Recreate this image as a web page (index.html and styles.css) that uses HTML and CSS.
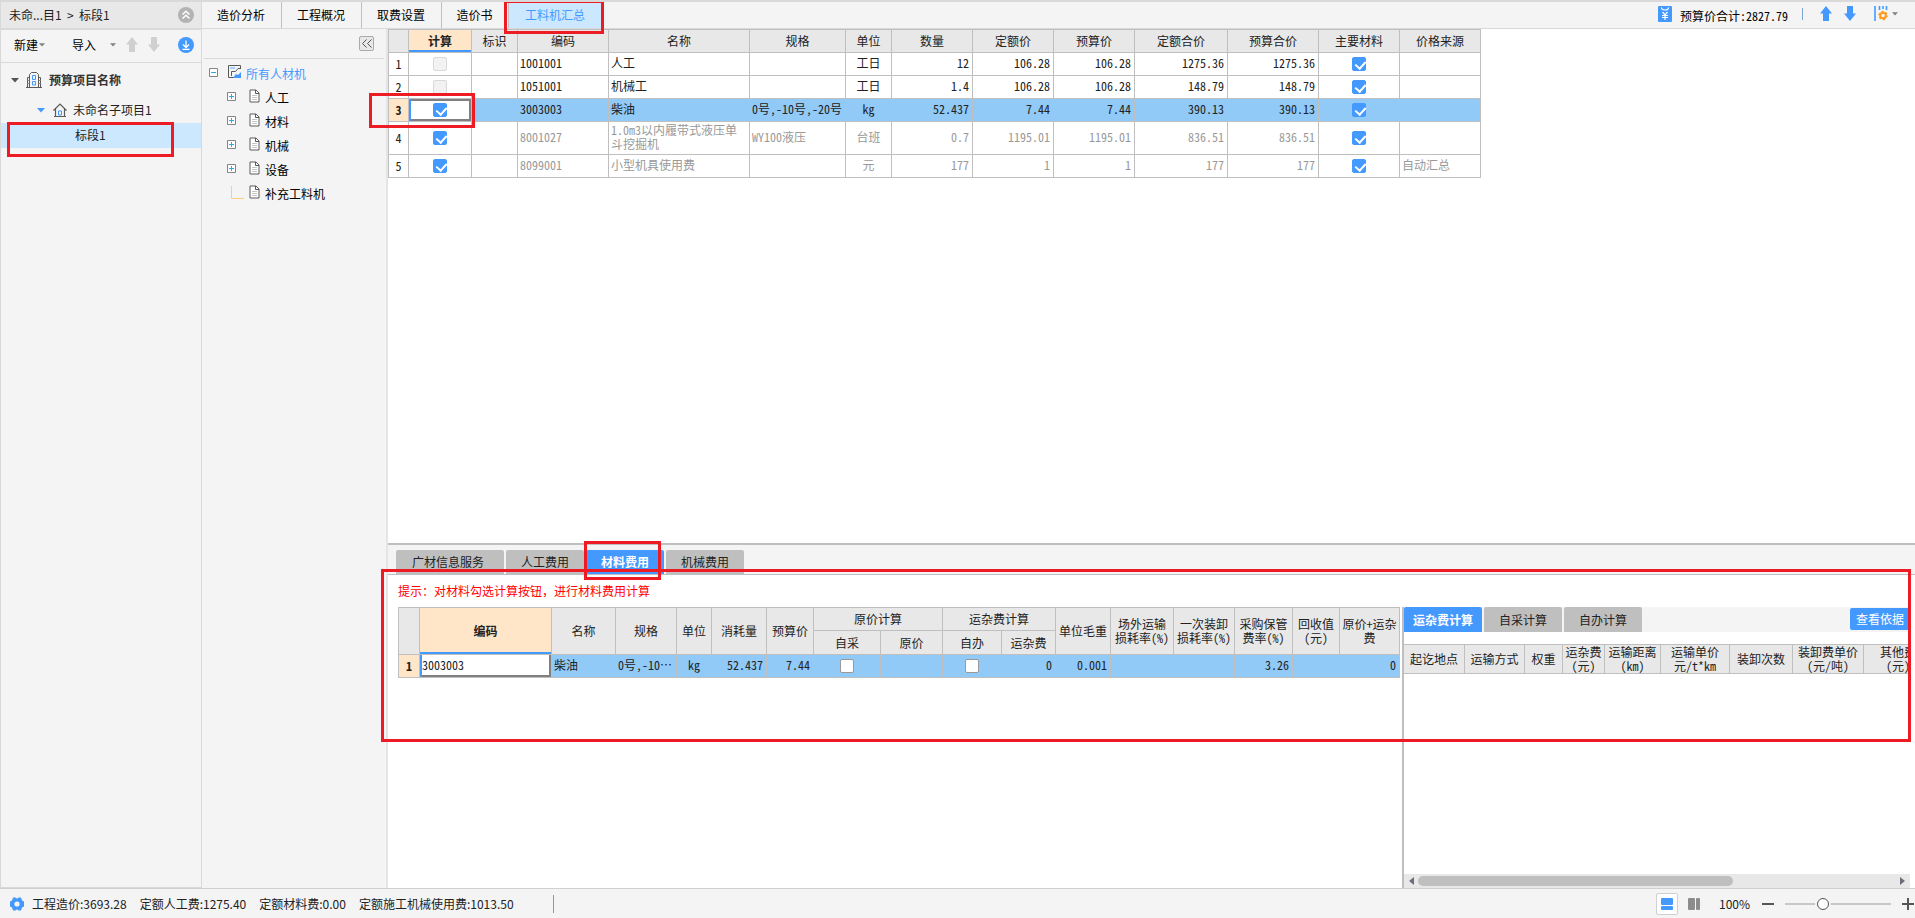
FILE: index.html
```html
<!DOCTYPE html>
<html lang="zh-CN">
<head>
<meta charset="utf-8">
<title>工料机汇总</title>
<link rel="stylesheet" href="styles.css">
</head>
<body>
<svg class="defs" aria-hidden="true">
  <symbol id="i-doc" viewBox="0 0 11 14"><path d="M1 1h6l3 3v9H1z" fill="#fff" stroke="#5a5a5a"/><path d="M6.500 1v3.500H10" fill="none" stroke="#5a5a5a"/><path d="M3 6.500h5M3 8.500h5M3 10.500h5" stroke="#c4c4c4"/></symbol>
  <symbol id="i-up" viewBox="0 0 12 16"><path d="M6 0l6 7.500H9V15H3V7.500H0z" fill="currentColor"/></symbol>
  <symbol id="i-down" viewBox="0 0 12 16"><path d="M6 15l6-7.500H9V0H3v7.500H0z" fill="currentColor"/></symbol>
  <symbol id="i-plus" viewBox="0 0 9 9"><path d="M.5.5h8v8h-8z" fill="#fff" stroke="#848484"/><path d="M2 4.500h5M4.500 2v5" stroke="#29abe2"/></symbol>
  <symbol id="i-caret" viewBox="0 0 8 5"><path d="M0 0h8L4 4.500z" fill="currentColor"/></symbol>
</svg>

<main class="app">
  <aside class="sidebar">
    <header class="crumb">
      <span>未命...目1&nbsp; &gt; &nbsp;标段1</span>
      <button class="icon-btn" aria-label="收起"><svg width="16" height="16" viewBox="0 0 16 16"><circle cx="8" cy="8" r="8" fill="#b3b3b3"/><path d="M4.500 7.500L8 4.300l3.500 3.200M4.500 11.500L8 8.300l3.500 3.200" fill="none" stroke="#fff" stroke-width="1.500"/></svg></button>
    </header>
    <div class="side-tools">
      <button class="text-btn new-btn">新建<svg class="drop" width="6" height="4"><use href="#i-caret"/></svg></button>
      <button class="text-btn import-btn">导入<svg class="drop" width="6" height="4"><use href="#i-caret"/></svg></button>
      <button class="icon-btn arrow-off up-off" aria-label="上移"><svg width="12" height="16"><use href="#i-up"/></svg></button>
      <button class="icon-btn arrow-off" aria-label="下移"><svg width="12" height="16"><use href="#i-down"/></svg></button>
      <button class="icon-btn push" aria-label="下载"><svg width="16" height="16" viewBox="0 0 16 16"><circle cx="8" cy="8" r="8" fill="#4499ff"/><path d="M8 3.500v7M5 7.500l3 3 3-3M4.500 12.300h7" fill="none" stroke="#fff" stroke-width="1.300"/></svg></button>
    </div>
    <ul class="project">
      <li class="root"><svg class="dark" width="8" height="5"><use href="#i-caret"/></svg>
        <svg width="16" height="16" viewBox="0 0 16 16"><g fill="none" stroke="#5a5a5a"><path d="M0 15.500h16M3.500 15V2.500L5.500.5h5l2 2V15M3 5.500H1.500V15M13 5.500h1.500V15"/><path d="M1.500 8.500h2M1.500 11.500h2M12.500 8.500h2M12.500 11.500h2" stroke="#8a8a8a"/><path d="M6.500 3.500h3v4h-3zM6.500 9.500h3v3.500h-3z" stroke="#4499ff"/></g></svg>
        <b>预算项目名称</b></li>
      <li class="child"><svg class="blue" width="8" height="5"><use href="#i-caret"/></svg>
        <svg width="14" height="14" viewBox="0 0 14 14"><path d="M.5 7.500L7 1l6.500 6.500M2.500 6v7.500h9V6M1 13.500h12" fill="none" stroke="#5a5a5a" stroke-width="1.200"/><path d="M5.500 8h3v4h-3z" fill="none" stroke="#4499ff"/></svg>
        <span>未命名子项目1</span></li>
      <li class="leaf">标段1<i class="mark mark-leaf"></i></li>
    </ul>
  </aside>

  <section class="work">
    <nav class="topbar">
      <button class="tab">造价分析</button><button class="tab">工程概况</button><button class="tab">取费设置</button><button class="tab short">造价书</button><button class="tab active">工料机汇总<i class="mark mark-tab"></i></button>
      <div class="summary">
        <svg width="14" height="16" viewBox="0 0 14 16"><rect width="14" height="16" rx="1" fill="#4499ff"/><path d="M3.500 1.500Q3.500 4 7 4t3.500-2.500M4.500 6L7 8.800 9.500 6M7 8.500V14M4 9.500h6M4 11.500h6" fill="none" stroke="#fff" stroke-width="1.200"/></svg>
        <span class="grid-text">预算价合计:2827.79</span>
        <i class="sep"></i>
        <button class="icon-btn blue" aria-label="上移"><svg width="12" height="16"><use href="#i-up"/></svg></button>
        <button class="icon-btn blue" aria-label="下移"><svg width="12" height="16"><use href="#i-down"/></svg></button>
        <button class="icon-btn set" aria-label="设置"><svg width="14" height="16" viewBox="0 0 14 16"><path d="M1 0v15M5.500 0v4M9 0v3M12.500 0v4" stroke="#4499ff" stroke-width="1.600"/><circle cx="9" cy="9.500" r="2.800" fill="none" stroke="#ff9a1f" stroke-width="2"/><circle cx="9" cy="9.500" r="4" fill="none" stroke="#ff9a1f" stroke-width="1.400" stroke-dasharray="2.100 2.090"/></svg><svg class="drop" width="6" height="4"><use href="#i-caret"/></svg></button>
      </div>
    </nav>

    <div class="panes">
      <aside class="category">
        <div class="cat-tools"><button class="collapse" aria-label="折叠"><svg width="10" height="9" viewBox="0 0 10 9"><path d="M4.500.5l-4 4 4 4M9.500.5l-4 4 4 4" fill="none" stroke="#555"/></svg></button></div>
        <ul class="tree">
          <li class="top"><svg width="9" height="9" viewBox="0 0 9 9"><path d="M.5.5h8v8h-8z" fill="#fff" stroke="#848484"/><path d="M2 4.500h5" stroke="#29abe2"/></svg><svg width="14" height="14" viewBox="0 0 14 14"><path d="M8.500 12.500H.5V.5h12V3" fill="none" stroke="#5a5a5a"/><path d="M2 2h5v2H2z" fill="#a6d0ff"/><path d="M3.500 11V6.500h4L10 3.500h3" fill="none" stroke="#5a5a5a"/><path d="M5 13l3-4 2 1 3-3v6z" fill="#4499ff"/></svg><span>所有人材机</span></li>
          <li><svg width="9" height="9"><use href="#i-plus"/></svg><svg width="11" height="14"><use href="#i-doc"/></svg><span>人工</span></li>
          <li><svg width="9" height="9"><use href="#i-plus"/></svg><svg width="11" height="14"><use href="#i-doc"/></svg><span>材料</span></li>
          <li><svg width="9" height="9"><use href="#i-plus"/></svg><svg width="11" height="14"><use href="#i-doc"/></svg><span>机械</span></li>
          <li><svg width="9" height="9"><use href="#i-plus"/></svg><svg width="11" height="14"><use href="#i-doc"/></svg><span>设备</span></li>
          <li class="last"><svg width="13" height="13" viewBox="0 0 13 13"><path d="M.5 0v12.500H13" fill="none" stroke="#ffcc80"/></svg><svg width="11" height="14"><use href="#i-doc"/></svg><span>补充工料机</span></li>
        </ul>
      </aside>

      <div class="content">
        <section class="upper">
          <table class="grid main-grid">
            <colgroup><col class="w20"><col class="w63"><col class="w46"><col class="w91"><col class="w141"><col class="w96"><col class="w46"><col class="w81"><col class="w81"><col class="w81"><col class="w93"><col class="w91"><col class="w81"><col class="w81"></colgroup>
            <thead><tr><th></th><th class="cur">计算</th><th>标识</th><th>编码</th><th>名称</th><th>规格</th><th>单位</th><th>数量</th><th>定额价</th><th>预算价</th><th>定额合价</th><th>预算合价</th><th>主要材料</th><th>价格来源</th></tr></thead>
            <tbody>
              <tr><td class="no">1</td><td class="c"><input type="checkbox" disabled aria-label="计算"></td><td></td><td>1001001</td><td>人工</td><td></td><td class="c">工日</td><td class="r">12</td><td class="r">106.28</td><td class="r">106.28</td><td class="r">1275.36</td><td class="r">1275.36</td><td class="c"><input type="checkbox" checked aria-label="主要材料"></td><td></td></tr>
              <tr><td class="no">2</td><td class="c"><input type="checkbox" disabled aria-label="计算"></td><td></td><td>1051001</td><td>机械工</td><td></td><td class="c">工日</td><td class="r">1.4</td><td class="r">106.28</td><td class="r">106.28</td><td class="r">148.79</td><td class="r">148.79</td><td class="c"><input type="checkbox" checked aria-label="主要材料"></td><td></td></tr>
              <tr class="sel"><td class="no">3</td><td class="c edit"><input type="checkbox" checked aria-label="计算"><i class="mark mark-row"></i></td><td></td><td>3003003</td><td>柴油</td><td>0号,-10号,-20号</td><td class="c">kg</td><td class="r">52.437</td><td class="r">7.44</td><td class="r">7.44</td><td class="r">390.13</td><td class="r">390.13</td><td class="c"><input type="checkbox" checked aria-label="主要材料"></td><td></td></tr>
              <tr class="dim tall"><td class="no">4</td><td class="c"><input type="checkbox" checked aria-label="计算"></td><td></td><td>8001027</td><td class="wrap">1.0m3以内履带式液压单斗挖掘机</td><td>WY100液压</td><td class="c">台班</td><td class="r">0.7</td><td class="r">1195.01</td><td class="r">1195.01</td><td class="r">836.51</td><td class="r">836.51</td><td class="c"><input type="checkbox" checked aria-label="主要材料"></td><td></td></tr>
              <tr class="dim"><td class="no">5</td><td class="c"><input type="checkbox" checked aria-label="计算"></td><td></td><td>8099001</td><td>小型机具使用费</td><td></td><td class="c">元</td><td class="r">177</td><td class="r">1</td><td class="r">1</td><td class="r">177</td><td class="r">177</td><td class="c"><input type="checkbox" checked aria-label="主要材料"></td><td>自动汇总</td></tr>
            </tbody>
          </table>
        </section>

        <section class="lower">
          <nav class="subtabs"><button class="wide">广材信息服务</button><button>人工费用</button><button class="on">材料费用<i class="mark mark-sub"></i></button><button>机械费用</button></nav>
          <p class="hint">提示：对材料勾选计算按钮，进行材料费用计算</p>
          <div class="split">
            <div class="left">
              <table class="grid cost-grid">
                <colgroup><col class="w21"><col class="w132"><col class="w64"><col class="w61"><col class="w35"><col class="w55"><col class="w47"><col class="w67"><col class="w62"><col class="w59"><col class="w54"><col class="w55"><col class="w63"><col class="w61"><col class="w58"><col class="w47"><col class="w60"></colgroup>
                <thead>
                  <tr><th rowspan="2"></th><th rowspan="2" class="cur">编码</th><th rowspan="2">名称</th><th rowspan="2">规格</th><th rowspan="2">单位</th><th rowspan="2">消耗量</th><th rowspan="2">预算价</th><th colspan="2">原价计算</th><th colspan="2">运杂费计算</th><th rowspan="2">单位毛重</th><th rowspan="2">场外运输<br>损耗率(%)</th><th rowspan="2">一次装卸<br>损耗率(%)</th><th rowspan="2">采购保管<br>费率(%)</th><th rowspan="2">回收值<br>(元)</th><th rowspan="2">原价+运杂<br>费</th></tr>
                  <tr class="second"><th>自采</th><th>原价</th><th>自办</th><th>运杂费</th></tr>
                </thead>
                <tbody><tr class="sel"><td class="no">1</td><td class="edit"><input class="code" type="text" value="3003003" aria-label="编码"></td><td>柴油</td><td>0号,-10…</td><td class="c">kg</td><td class="r">52.437</td><td class="r">7.44</td><td class="c"><input type="checkbox" aria-label="自采"></td><td></td><td class="c"><input type="checkbox" aria-label="自办"></td><td class="r">0</td><td class="r">0.001</td><td></td><td></td><td class="r">3.26</td><td></td><td class="r">0</td></tr></tbody>
              </table>
            </div>
            <div class="right">
              <div class="calc-tabs"><button class="on">运杂费计算</button><button>自采计算</button><button>自办计算</button><button class="basis">查看依据</button></div>
              <div class="clip">
                <table class="grid freight-grid">
                  <colgroup><col class="w61"><col class="w60"><col class="w38"><col class="w42"><col class="w56"><col class="w69"><col class="w63"><col class="w71"><col class="w69"></colgroup>
                  <thead><tr><th>起讫地点</th><th>运输方式</th><th>权重</th><th>运杂费<br>(元)</th><th>运输距离<br>(km)</th><th>运输单价<br>元/t*km</th><th>装卸次数</th><th>装卸费单价<br>(元/吨)</th><th>其他费<br>(元)</th></tr></thead>
                </table>
              </div>
              <div class="hscroll"><button aria-label="左"><svg width="5" height="8"><path d="M5 0v8L0 4z" fill="#6e6e7a"/></svg></button><div class="track"><div class="thumb"></div></div><button aria-label="右"><svg width="5" height="8"><path d="M0 0v8l5-4z" fill="#6e6e7a"/></svg></button></div>
            </div>
          </div>
          <i class="mark mark-area"></i>
        </section>
      </div>
    </div>
  </section>
</main>

<footer class="status">
  <svg width="14" height="16" viewBox="0 0 14 16"><path d="M3 1.500h2.500L7 2.800l1.500-1.300H11l1 3 2 1v5l-2 1-1 3H8.500L7 13.200l-1.500 1.300H3l-1-3-2-1v-5l2-1z" fill="#4499ff"/><circle cx="7" cy="8" r="2.600" fill="#f4f4f4"/></svg>
  <span>工程造价:3693.28</span><span>定额人工费:1275.40</span><span>定额材料费:0.00</span><span>定额施工机械使用费:1013.50</span>
  <i class="bar"></i>
  <div class="zoom">
    <button class="view on" aria-label="上下布局"><svg width="12" height="12"><rect width="12" height="7" rx="1" fill="#4499ff"/><rect y="8" width="12" height="4" rx="1" fill="#4499ff"/></svg></button>
    <button class="view" aria-label="左右布局"><svg width="12" height="12"><rect width="7" height="12" rx="1" fill="#8c8c8c"/><rect x="8" width="4" height="12" rx="1" fill="#8c8c8c"/></svg></button>
    <label for="zoom">100%</label>
    <button class="step" aria-label="缩小"><svg width="12" height="12"><path d="M0 6h12" stroke="#555" stroke-width="2"/></svg></button>
    <input id="zoom" type="range" min="0" max="100" value="34">
    <button class="step" aria-label="放大"><svg width="12" height="12"><path d="M0 6h12M6 0v12" stroke="#555" stroke-width="2"/></svg></button>
  </div>
</footer>
</body>
</html>
```
FILE: styles.css
```css
* { box-sizing: border-box; }
body {
  margin: 0;
  height: 100vh;
  display: flex;
  flex-direction: column;
  overflow: hidden;
  border-top: 2px solid #d9d9d9;
  background: #f4f4f4;
  color: #222;
  font: 12px/16px "Noto Sans CJK SC", sans-serif;
}
button { margin: 0; padding: 0; border: 0; background: none; color: inherit; font: inherit; white-space: nowrap; }
svg { display: block; flex: none; }
ul { list-style: none; margin: 0; padding: 0; }
.defs { position: absolute; width: 0; height: 0; }
.blue { color: #4499ff; }
.dark { color: #555; }
.drop { color: #808080; }
.grid-text, .grid, .hint { font-family: "Noto Sans Mono CJK SC", "Noto Sans CJK SC", monospace; }
.mark { position: absolute; border: 3px solid #ed1c24; pointer-events: none; z-index: 5; }

.app { flex: 1; display: flex; min-height: 0; }
.work { flex: 1; min-width: 0; display: flex; flex-direction: column; }

/* project sidebar */
.sidebar { flex: none; width: 202px; border: 1px solid #d9d9d9; border-top: 0; }
.crumb { height: 28px; padding: 0 7px 0 8px; display: flex; align-items: center; justify-content: space-between; background: #e8e8e8; border-bottom: 2px solid #d9d9d9; }
.side-tools { height: 33px; padding: 0 7px 2px 13px; display: flex; align-items: center; border-bottom: 1px solid #d9d9d9; }
.text-btn { display: flex; align-items: center; color: #000; }
.new-btn { gap: 1px; }
.import-btn { gap: 14px; margin: 0 10px 0 27px; }
.arrow-off { color: #d0d0d0; }
.up-off { margin-right: 10px; }
.push { margin-left: auto; }
.project li { display: flex; align-items: center; position: relative; }
.root { height: 34px; padding-left: 10px; gap: 7px; }
.root b { color: #333; }
.child { height: 26px; padding-left: 36px; gap: 8px; }
.child svg + span { margin-left: -2px; }
.leaf { height: 25px; padding: 0 0 2px 74px; background: #cce8ff; }
.mark-leaf { left: 6px; top: -1px; width: 167px; height: 35px; }

/* top tabs */
.topbar { height: 27px; flex: none; display: flex; border-bottom: 1px solid #d9d9d9; }
.tab { width: 80px; padding-right: 1px; border-right: 1px solid #bfbfbf; color: #000; }
.tab.short { width: 67px; }
.tab.active { position: relative; width: 93px; border: 0; background: #cce8ff; color: #4499ff; }
.mark-tab { left: -5px; top: -2px; width: 100px; height: 34px; }
.summary { margin-left: auto; padding: 0 17px 3px 0; display: flex; align-items: center; color: #000; }
.summary .grid-text { margin: 4px 14px 0 8px; }
.sep { width: 1px; height: 12px; margin-right: 17px; background: #7da7d0; }
.summary .blue { margin-right: 12px; }
.set { display: flex; align-items: center; gap: 4px; margin-left: 6px; }

.panes { flex: 1; display: flex; min-height: 0; }
.category { flex: none; width: 186px; padding: 0 2px; border-right: 2px solid #e5e5e5; }
.cat-tools { height: 30px; padding: 7px 10px 0 0; border-bottom: 1px solid #d9d9d9; }
.collapse { width: 15px; height: 15px; margin-left: auto; display: flex; align-items: center; justify-content: center; border: 1px solid #aaa; border-radius: 2px; background: #e8e8e8; }
.tree { padding-top: 3px; color: #000; }
.tree li { height: 24px; padding-left: 23px; display: flex; align-items: center; }
.tree svg { margin-bottom: 4px; }
.tree svg + svg { margin-left: 13px; }
.tree span { margin-left: 5px; }
.tree .top { padding-left: 5px; color: #4499ff; }
.tree .top svg + svg { margin-left: 10px; }
.tree .top span { margin-left: 4px; }
.tree .last { padding-left: 27px; }
.tree .last svg + svg { margin-left: 5px; }

.content { flex: 1; min-width: 0; display: flex; flex-direction: column; background: #fff; }
.upper { flex: 1; min-height: 0; }

/* data grids */
.grid { table-layout: fixed; width: 0; border-spacing: 0; border: solid #bfbfbf; border-width: 1px 0 0 1px; line-height: 14px; }
.grid th, .grid td { height: 23px; padding: 0; border: solid #bfbfbf; border-width: 0 1px 1px 0; white-space: nowrap; }
.grid th { background: #e8e8e8; font-weight: 400; text-align: center; }
.grid td { padding: 0 0 2px 2px; text-align: left; }
.grid .c { padding: 0 0 2px; text-align: center; }
.grid .r { padding-right: 3px; text-align: right; }
.grid .no { padding: 0; text-align: center; color: #222; }
.grid .wrap { padding-right: 8px; white-space: normal; }
.grid .cur { background: #ffe6c8; font-weight: 700; box-shadow: inset 0 -2px #4499ff; }
.grid .sel td { background: #91c9f7; }
.grid .sel .no { background: #ffe6c8; font-weight: 700; }
.grid .sel .edit { position: relative; background: #fff; box-shadow: inset 2px 0 #4499ff, inset 0 0 0 2px #808080; }
.cost-grid .sel .edit { box-shadow: inset 2px 0 #4499ff, inset -2px -2px #808080; }
.grid .dim td { color: #999; }
.grid .dim .no { color: #222; }
.grid .tall td { height: 33px; }
.grid .second th { height: 24px; }
.mark-row { left: -40px; top: -6px; width: 106px; height: 35px; }
.code { display: block; width: 100%; padding: 0; border: 0; background: none; font: inherit; color: #222; }
.code:focus { outline: none; }
input[type="checkbox"] { appearance: none; position: relative; display: block; width: 14px; height: 14px; margin: 2px auto 0; border: 1px solid #999; border-radius: 2px; background: #fff; }
input[type="checkbox"]:disabled { border-color: #d9d9d9; background: #f2f2f2; }
input[type="checkbox"]:checked { border-color: #4499ff; background: #4499ff; }
input[type="checkbox"]:checked::after { content: ""; position: absolute; left: 4px; top: 1px; width: 5px; height: 8px; border: solid #fff; border-width: 0 2px 2px 0; transform: rotate(42deg); }

.w20 { width: 20px; } .w21 { width: 21px; } .w35 { width: 35px; } .w38 { width: 38px; }
.w42 { width: 42px; } .w46 { width: 46px; } .w47 { width: 47px; } .w54 { width: 54px; }
.w55 { width: 55px; } .w56 { width: 56px; } .w58 { width: 58px; } .w59 { width: 59px; }
.w60 { width: 60px; } .w61 { width: 61px; } .w62 { width: 62px; } .w63 { width: 63px; }
.w64 { width: 64px; } .w67 { width: 67px; } .w69 { width: 69px; } .w71 { width: 71px; }
.w81 { width: 81px; } .w91 { width: 91px; } .w93 { width: 93px; } .w96 { width: 96px; }
.w132 { width: 132px; } .w141 { width: 141px; }

/* lower panel */
.lower { position: relative; flex: none; height: 345px; display: flex; flex-direction: column; border-top: 2px solid #bfbfbf; }
.subtabs { flex: none; height: 30px; padding: 5px 8px 0; display: flex; gap: 2px; background: #f4f4f4; border-bottom: 1px solid #bfbfbf; }
.subtabs button { width: 78px; border-radius: 2px 2px 0 0; background: #bfbfbf; }
.subtabs .wide { width: 108px; padding-right: 4px; }
.subtabs .on { position: relative; background: #4499ff; color: #fff; font-weight: 700; }
.mark-sub { left: -2px; top: -9px; width: 77px; height: 39px; }
.hint { flex: none; height: 32px; margin: 0; padding-left: 10px; line-height: 32px; color: #f00; }
.split { flex: 1; min-height: 0; display: flex; }
.left { flex: none; padding: 0 2px 0 10px; }
.right { flex: 1; min-width: 0; margin-right: 5px; display: flex; flex-direction: column; border-left: 2px solid #bfbfbf; }
.calc-tabs { height: 25px; flex: none; display: flex; gap: 2px; background: #f4f4f4; }
.calc-tabs button { width: 78px; border-radius: 2px 2px 0 0; background: #bfbfbf; }
.calc-tabs .on { background: #4499ff; color: #fff; font-weight: 700; }
.calc-tabs .basis { width: 60px; height: 22px; margin: 1px 0 0 auto; border-radius: 2px; background: #4499ff; color: #fff; }
.clip { flex: 1; padding-top: 12px; overflow: hidden; }
.freight-grid { border-left: 0; }
.freight-grid th { height: 29px; }
.hscroll { height: 14px; flex: none; padding: 0 5px; display: flex; align-items: center; gap: 4px; background: #e8e8e8; }
.track { flex: 1; }
.thumb { width: 66%; height: 10px; border-radius: 5px; background: #bfbfbf; }
.mark-area { left: -7px; right: 4px; top: 24px; height: 173px; }

/* status bar */
.status { flex: none; height: 30px; padding: 0 1px 0 10px; display: flex; align-items: center; border-top: 1px solid #d0d0d0; }
.status span { margin-left: 13px; white-space: nowrap; }
.status svg + span { margin-left: 8px; }
.bar { width: 1px; height: 18px; margin-left: 39px; background: #8a9bab; }
.zoom { margin-left: auto; display: flex; align-items: center; }
.view { width: 22px; height: 22px; display: flex; align-items: center; justify-content: center; border: 1px solid transparent; border-radius: 2px; }
.view.on { margin-right: 5px; background: #fff; border-color: #d0d0d0; }
.zoom label { width: 57px; padding-left: 14px; }
.step { width: 12px; }
.zoom input { appearance: none; width: 106px; height: 12px; margin: 0 11px; background: linear-gradient(#c8c8c8, #c8c8c8) center / 100% 2px no-repeat; }
.zoom input::-webkit-slider-thumb { appearance: none; width: 12px; height: 12px; border: 1px solid #555; border-radius: 50%; background: #fff; box-shadow: 0 0 0 2px #f4f4f4; }
```
